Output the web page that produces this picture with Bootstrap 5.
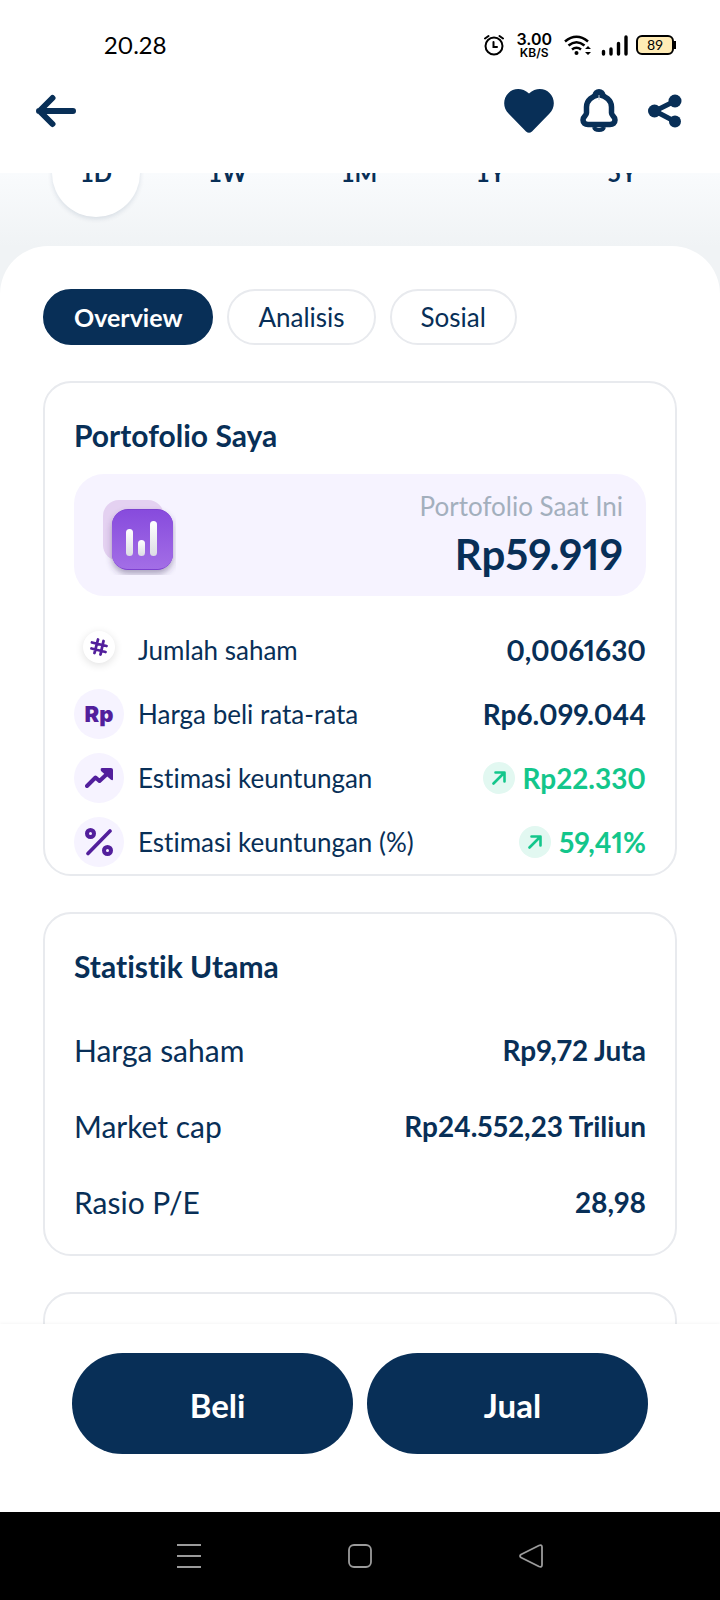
<!DOCTYPE html>
<html lang="id">
<head>
<meta charset="utf-8">
<meta name="viewport" content="width=device-width, initial-scale=1">
<title>Portofolio Saham</title>
<link href="https://cdn.jsdelivr.net/npm/bootstrap@5.3.0/dist/css/bootstrap.min.css" rel="stylesheet">
<style>
  :root { --navy: #082f57; --line: #e8eaee; --lilac: #f6f3ff; --violet: #521f9c; --green: #13c68b; }
  body { font-family: Lato, "Liberation Sans", sans-serif; font-size: 26px; line-height: 30px; font-variant-ligatures: none; font-variant-numeric: proportional-nums; color: var(--navy); background: #fff; }
  button { color: inherit; }
  .btn-plain { padding: 0; border: 0; background: none; line-height: 0; }
  svg { display: block; flex: none; }

  .status-bar { height: 90px; padding: 0 44px 0 104px; color: #000; }
  .clock { font-size: 24px; }
  .net-speed { font-family: Inter, sans-serif; font-weight: 600; font-size: 16px; line-height: 16px; }
  .net-speed span { display: block; font-size: 12px; line-height: 12px; }
  .battery { width: 38px; height: 20px; border: 2px solid #000; border-radius: 6px; background: #ffebb5; font-size: 14px; line-height: 16px; }
  .battery-tip { width: 2px; height: 8px; background: #000; }
  .app-bar { height: 42px; margin-bottom: 41px; padding: 0 38px 0 36px; }
  .app-icons { gap: 26px; }

  .scroller { min-height: 0; overflow-y: auto; scrollbar-width: none; background: linear-gradient(#f9fbfd, #f0f3f5 74px, #f1f3f5); }
  .scroller::-webkit-scrollbar { display: none; }
  .periods { margin-top: -44px; padding: 0 54px 29px 52px; }
  .period { width: 88px; height: 88px; border: 0; border-radius: 50%; background: none; font-size: 24px; font-weight: 700; }
  .period.active { background: #fff; box-shadow: 0 2px 5px #0a2d501f; }
  .sheet { background: #fff; border-radius: 48px 48px 0 0; padding: 43px 43px 40px; }
  .stack { gap: 36px; }
  .tab-list { gap: 14px; }
  .tab-pill { height: 56px; padding: 0 29px; border: 2px solid var(--line); border-radius: 28px; background: #fff; }
  .tab-pill.active { background: var(--navy); border-color: var(--navy); color: #fff; font-size: 25px; font-weight: 700; }

  .panel { border: 2px solid var(--line); border-radius: 28px; padding: 34px 29px 7px; }
  .panel h2 { font-size: 30px; line-height: 36px; font-weight: 700; margin: 0; }
  .panel-stats { padding-bottom: 34px; }
  .panel-next { min-height: 240px; }
  .summary { margin: 21px 0 29px; padding: 0 23px 0 28px; height: 122px; border-radius: 30px; background: var(--lilac); }
  .summary-label { color: #a3afbd; }
  .summary-value { font-size: 42px; line-height: 50px; margin-top: 8px; }
  .rows { gap: 14px; }
  .row-icon { width: 50px; height: 50px; border-radius: 50%; background: var(--lilac); margin-right: 14px; color: var(--violet); font-family: Inter, sans-serif; font-size: 22px; font-weight: 900; }
  .row-icon-small { width: 32px; height: 32px; margin: 0 23px 6px 9px; background: #fff; box-shadow: 0 2px 8px #0000001f; }
  .rows > div { height: 50px; }
  .rows dt { font-weight: 400; }
  .rows dd, .stats dd { margin: 0 0 0 auto; font-size: 28px; font-weight: 700; }
  .gain { color: var(--green); gap: 8px; }
  .gain-icon { width: 32px; height: 32px; border-radius: 50%; background: #e2f8f1; }
  .stats { margin: 48px 0 0; gap: 40px; }
  .stats > div { height: 36px; }
  .stats dt { font-size: 30px; font-weight: 400; }

  .actions { padding: 29px 72px 58px; gap: 14px; background: #fff; box-shadow: 0 -1px 3px #0000000a; z-index: 1; }
  .btn-trade { height: 101px; padding: 2px 0 0 10px; border: 0; border-radius: 51px; background: var(--navy); color: #fff; font-size: 33px; font-weight: 700; }
  .system-nav { height: 88px; gap: 147px; background: #000; color: #9b9b9b; }
</style>
</head>
<body>
<div class="vh-100 d-flex flex-column">
  <header class="bg-white flex-shrink-0">
    <div class="status-bar d-flex align-items-center">
      <span class="clock me-auto">20.28</span>
      <svg width="20" height="22" viewBox="0 0 20 22" fill="none" stroke="#000" stroke-width="2" stroke-linecap="round" aria-label="Alarm"><circle cx="10" cy="12" r="8.5"/><path d="M9.500 8v5h3.500M1 4.500 4.500 2M19 4.500 15.500 2"/></svg>
      <div class="net-speed text-center mx-2 px-1">3.00<span>KB/S</span></div>
      <svg width="27" height="21" viewBox="0 0 27 21" fill="none" stroke="#000" stroke-width="2.600" aria-label="Wi-Fi"><path d="M1 6.500Q12.500-3 24 6.500M4.500 10.500Q12.500 4 20.500 10.500M8 14.500Q12.500 11 17 14.500"/><circle cx="12.500" cy="18" r="2" fill="#000" stroke="none"/><path d="M21 14l3-3 3 3zM21 17l3 3 3-3z" fill="#000" stroke="none"/></svg>
      <svg class="ms-2" width="29" height="21" viewBox="0 0 29 21" stroke="#000" stroke-width="3.400" stroke-linecap="round" aria-label="Sinyal"><path d="M4.500 16.500v2.500M12 14v5M19.500 8.500v10.500M27 2v17"/></svg>
      <div class="battery text-center ms-2 text-black">89</div><div class="battery-tip"></div>
    </div>
    <nav class="app-bar d-flex align-items-center justify-content-between">
      <button type="button" class="btn-plain" aria-label="Kembali">
        <svg width="41" height="34" viewBox="0 0 41 34" fill="none" stroke="#082f57" stroke-width="6" stroke-linecap="round" stroke-linejoin="round"><path d="M37 17H3M16.500 4 3.500 17l13 13"/></svg>
      </button>
      <div class="app-icons d-flex align-items-center">
        <button type="button" class="btn-plain" aria-label="Favorit">
          <svg width="50" height="44" viewBox="0 0 50 44" fill="#082f57"><path d="M25 4.500C32-2 41-.8 45.500 4c6 6 5.500 15 0 20.500L28 42.500q-3 2.500-6 0L4.500 24.500C-1 19-1.500 10 4.500 4 9-.8 18-2 25 4.500z"/></svg>
        </button>
        <button type="button" class="btn-plain" aria-label="Notifikasi">
          <svg width="38" height="44" viewBox="0 0 38 44" fill="none" stroke="#082f57" stroke-width="5.500" stroke-linejoin="round"><path d="M19 5.500C25 7 31.500 11 31.500 18v6c0 3 3.500 3 3.500 7 0 3-2 4.500-5 4.500H8c-3 0-5-1.500-5-4.500 0-4 3.500-4 3.500-7v-6C6.500 11 13 7 19 5.500z"/><path d="M14 38c1 4 9 4 10 0" stroke-width="4"/><path d="M12.500 6a6.500 6 0 0 1 13 0l-6.500 2z" fill="#082f57" stroke="none"/><path d="M19 6v5" stroke="#b9c4d0" stroke-width="1"/></svg>
        </button>
        <button type="button" class="btn-plain ms-1" aria-label="Bagikan">
          <svg width="34" height="34" viewBox="0 0 34 34" fill="#082f57"><path d="M27 7 7 17l20 10.500" fill="none" stroke="#082f57" stroke-width="5"/><circle cx="27" cy="7" r="6.500"/><circle cx="6.500" cy="17" r="6.500"/><circle cx="27" cy="27.500" r="6"/></svg>
        </button>
      </div>
    </nav>
  </header>

  <main class="scroller flex-grow-1">
    <div class="periods d-flex justify-content-between">
      <button type="button" class="period active">1D</button>
      <button type="button" class="period">1W</button>
      <button type="button" class="period">1M</button>
      <button type="button" class="period">1Y</button>
      <button type="button" class="period">5Y</button>
    </div>
    <div class="sheet stack d-flex flex-column">
      <div class="tab-list d-flex" role="tablist">
        <button type="button" class="tab-pill active" role="tab" aria-selected="true">Overview</button>
        <button type="button" class="tab-pill" role="tab" aria-selected="false">Analisis</button>
        <button type="button" class="tab-pill" role="tab" aria-selected="false">Sosial</button>
      </div>

      <section class="panel">
        <h2>Portofolio Saya</h2>
        <div class="summary d-flex align-items-center justify-content-between">
          <svg width="74" height="80" viewBox="0 0 74 80" aria-hidden="true">
            <defs>
              <linearGradient id="tile" x2="0" y2="1"><stop stop-color="#874bdd"/><stop offset="1" stop-color="#a36ee6"/></linearGradient>
              <linearGradient id="bars" x2="0" y2="1"><stop stop-color="#fff"/><stop offset="1" stop-color="#dcdce4"/></linearGradient>
              <filter id="shade" x="-20%" y="-20%" width="140%" height="150%"><feDropShadow dx="0" dy="4" stdDeviation="3" flood-color="#3d3160" flood-opacity=".4"/></filter>
            </defs>
            <rect x="1" y="5" width="61" height="61" rx="16" fill="#e4d1f1"/>
            <rect x="10" y="14" width="61" height="61" rx="16" fill="#7d3fd0" filter="url(#shade)"/>
            <rect x="10" y="15" width="61" height="59" rx="15" fill="url(#tile)"/>
            <rect x="24" y="34" width="7" height="27" rx="3.500" fill="url(#bars)"/>
            <rect x="36" y="45" width="7" height="16" rx="3.500" fill="url(#bars)"/>
            <rect x="48" y="26" width="7" height="35" rx="3.500" fill="url(#bars)"/>
          </svg>
          <div class="text-end">
            <div class="summary-label">Portofolio Saat Ini</div>
            <div class="summary-value fw-bold">Rp59.919</div>
          </div>
        </div>
        <dl class="rows d-flex flex-column mb-0">
          <div class="d-flex align-items-center">
            <dt class="d-flex align-items-center">
              <span class="row-icon row-icon-small d-flex align-items-center justify-content-center"><svg width="18" height="18" viewBox="0 0 18 18" stroke="#521f9c" stroke-width="2.800" stroke-linecap="round"><path d="M8 1.500 4.500 15M13.500 3l-3 13.500M2 4.500 16.500 8M1.500 10.500l14 3.500"/></svg></span>Jumlah saham</dt>
            <dd>0,0061630</dd>
          </div>
          <div class="d-flex align-items-center">
            <dt class="d-flex align-items-center"><span class="row-icon d-flex align-items-center justify-content-center">Rp</span>Harga beli rata-rata</dt>
            <dd>Rp6.099.044</dd>
          </div>
          <div class="d-flex align-items-center">
            <dt class="d-flex align-items-center"><span class="row-icon d-flex align-items-center justify-content-center"><svg width="28" height="20" viewBox="0 0 28 20"><path d="M2 18 10.500 9.500l4 3.500L22 6" fill="none" stroke="#521f9c" stroke-width="4" stroke-linecap="round" stroke-linejoin="round"/><path d="M17 0h9q2 0 2 2V11q0 2-2 .8L16 3Q15 0 17 0z" fill="#521f9c"/></svg></span>Estimasi keuntungan</dt>
            <dd class="gain d-flex align-items-center"><span class="gain-icon d-flex align-items-center justify-content-center"><svg width="14" height="14" viewBox="0 0 14 14" fill="none" stroke="#13c68b" stroke-width="2.600" stroke-linecap="round" stroke-linejoin="round"><path d="M1.500 12.500 12 2M3.500 1.500h9v9"/></svg></span>Rp22.330</dd>
          </div>
          <div class="d-flex align-items-center">
            <dt class="d-flex align-items-center"><span class="row-icon d-flex align-items-center justify-content-center"><svg width="28" height="28" viewBox="0 0 28 28" fill="none" stroke="#521f9c" stroke-width="4" stroke-linecap="round"><circle cx="5.500" cy="5.500" r="3.500"/><circle cx="22.500" cy="22.500" r="3.500"/><path d="M25 3 3 25.500" stroke-width="3.600"/></svg></span>Estimasi keuntungan (%)</dt>
            <dd class="gain d-flex align-items-center"><span class="gain-icon d-flex align-items-center justify-content-center"><svg width="14" height="14" viewBox="0 0 14 14" fill="none" stroke="#13c68b" stroke-width="2.600" stroke-linecap="round" stroke-linejoin="round"><path d="M1.500 12.500 12 2M3.500 1.500h9v9"/></svg></span>59,41%</dd>
          </div>
        </dl>
      </section>

      <section class="panel panel-stats">
        <h2>Statistik Utama</h2>
        <dl class="stats d-flex flex-column">
          <div class="d-flex align-items-center"><dt>Harga saham</dt><dd>Rp9,72 Juta</dd></div>
          <div class="d-flex align-items-center"><dt>Market cap</dt><dd>Rp24.552,23 Triliun</dd></div>
          <div class="d-flex align-items-center"><dt>Rasio P/E</dt><dd>28,98</dd></div>
        </dl>
      </section>

      <section class="panel panel-next"></section>
    </div>
  </main>

  <div class="actions d-flex flex-shrink-0">
    <button type="button" class="btn-trade flex-fill w-50">Beli</button>
    <button type="button" class="btn-trade flex-fill w-50">Jual</button>
  </div>
  <nav class="system-nav d-flex align-items-center justify-content-center flex-shrink-0">
    <button type="button" class="btn-plain" aria-label="Aplikasi terbaru"><svg width="24" height="24" viewBox="0 0 24 24" stroke="#9b9b9b" stroke-width="2"><path d="M0 1h24M0 12h24M0 23h24"/></svg></button>
    <button type="button" class="btn-plain" aria-label="Beranda"><svg width="24" height="24" viewBox="0 0 24 24" fill="none" stroke="#9b9b9b" stroke-width="1.800"><rect x="1" y="1" width="22" height="22" rx="5"/></svg></button>
    <button type="button" class="btn-plain" aria-label="Kembali ke layar sebelumnya"><svg width="24" height="24" viewBox="0 0 24 24" fill="none" stroke="#9b9b9b" stroke-width="1.800" stroke-linejoin="round"><path d="M20 1.500 2 10.500q-2 1.500 0 3l18 9q3 1 3-1.500v-18q0-2.500-3-1.500z"/></svg></button>
  </nav>
</div>
<script src="https://cdn.jsdelivr.net/npm/bootstrap@5.3.0/dist/js/bootstrap.bundle.min.js"></script>
</body>
</html>
